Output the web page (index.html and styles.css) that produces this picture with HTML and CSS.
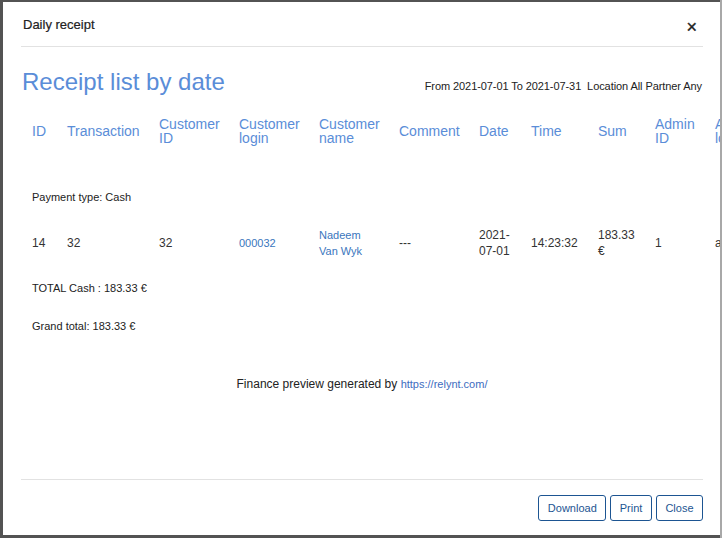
FILE: index.html
```html
<!DOCTYPE html>
<html>
<head>
<meta charset="utf-8">
<link rel="stylesheet" href="styles.css">
</head>
<body>
<div class="modal">
  <div class="modal-header">
    <span class="modal-title">Daily receipt</span>
    <span class="close-x">×</span>
  </div>
  <div class="modal-body">
    <div class="report-head">
      <h1 class="report-title">Receipt list by date</h1>
      <span class="report-info">From 2021-07-01 To 2021-07-31 &nbsp;Location All Partner Any</span>
    </div>
    <table class="receipts">
      <colgroup>
        <col class="c-id"><col class="c-tr"><col class="c-80"><col class="c-80"><col class="c-80"><col class="c-80"><col class="c-date"><col class="c-time"><col class="c-sum"><col class="c-admin"><col class="c-login">
      </colgroup>
      <thead>
        <tr>
          <th>ID</th><th>Transaction</th><th>Customer ID</th><th>Customer login</th><th>Customer name</th><th>Comment</th><th>Date</th><th>Time</th><th>Sum</th><th>Admin ID</th><th>Admin login</th>
        </tr>
      </thead>
      <tbody>
        <tr class="group-row"><td colspan="11">Payment type: Cash</td></tr>
        <tr class="data-row">
          <td>14</td><td>32</td><td>32</td><td><a class="lnk">000032</a></td><td><a class="lnk">Nadeem Van Wyk</a></td><td>---</td><td>2021-07-01</td><td>14:23:32</td><td>183.33 €</td><td>1</td><td>admin</td>
        </tr>
        <tr class="total-row"><td colspan="11">TOTAL Cash : 183.33 €</td></tr>
        <tr class="grand-row"><td colspan="11">Grand total: 183.33 €</td></tr>
      </tbody>
    </table>
    <p class="generated">Finance preview generated by <a class="lnk">https://relynt.com/</a></p>
  </div>
  <div class="modal-footer">
    <button class="btn">Download</button>
    <button class="btn">Print</button>
    <button class="btn">Close</button>
  </div>
</div>
</body>
</html>
```
FILE: styles.css
```css
html {
  background: linear-gradient(to right, #535353 720px, #a8a8a8 720px);
  height: 100%;
}
body {
  margin: 0;
  padding: 2px 0 0 3px;
  font-family: "Liberation Sans", Arial, sans-serif;
  color: #333;
}
.modal {
  width: 717px;
  height: 533px;
  background: #fff;
  display: flex;
  flex-direction: column;
  overflow: hidden;
  box-sizing: border-box;
  padding: 0 17px 0 18px;
}
.modal-header {
  display: flex;
  justify-content: space-between;
  align-items: center;
  padding: 14px 0 12px;
  border-bottom: 1px solid #e2e2e2;
  height: 18px;
  flex: none;
}
.modal-title {
  font-size: 13px;
  color: #222;
  line-height: 18px;
  padding-left: 2px;
  -webkit-text-stroke: 0.2px #222;
}
.close-x {
  font-size: 18px;
  font-weight: normal;
  color: #222;
  line-height: 18px;
  margin-right: 6px;
  margin-top: 3px;
  -webkit-text-stroke: 0.4px #222;
}
.modal-body {
  flex: 1;
  min-height: 0;
}
.report-head {
  display: flex;
  justify-content: space-between;
  align-items: baseline;
  margin-top: 21px;
  padding-right: 1px;
}
.report-title {
  margin: 0;
  font-size: 24px;
  line-height: 28px;
  font-weight: normal;
  color: #5a8dd8;
  padding-left: 1px;
}
.report-info {
  font-size: 11px;
  color: #222;
  letter-spacing: -0.08px;
}
.receipts {
  border-collapse: collapse;
  table-layout: fixed;
  width: 740px;
  margin: 14px 0 0 11px;
}
.c-id { width: 35px; }
.c-tr { width: 92px; }
.c-80 { width: 80px; }
.c-date { width: 52px; }
.c-time { width: 67px; }
.c-sum { width: 57px; }
.c-admin { width: 60px; }
.c-login { width: 77px; }
.receipts th {
  font-weight: normal;
  font-size: 14px;
  line-height: 14px;
  color: #5a8dd8;
  text-align: left;
  height: 42px;
  padding: 0 18px 0 0;
  vertical-align: middle;
}
.receipts td {
  padding: 0 18px 0 0;
  text-align: left;
  vertical-align: middle;
}
.group-row td {
  font-size: 11px;
  line-height: 14px;
  padding-top: 38px;
  padding-bottom: 14px;
  color: #222;
}
.data-row td {
  font-size: 12px;
  line-height: 16px;
  padding-top: 9px;
  padding-bottom: 9px;
  color: #333;
}
.data-row td .lnk {
  font-size: 11px;
}
.total-row td {
  font-size: 11px;
  line-height: 14px;
  padding-top: 13px;
  padding-bottom: 12px;
  color: #222;
}
.grand-row td {
  font-size: 11px;
  line-height: 14px;
  padding-top: 12px;
  color: #222;
}
.lnk {
  color: #3a76bd;
  text-decoration: none;
}
.generated {
  margin: 43px 0 0;
  text-align: center;
  font-size: 12px;
  line-height: 16px;
  color: #222;
}
.generated .lnk {
  font-size: 11px;
  color: #3d6cc0;
}
.modal-footer {
  flex: none;
  border-top: 1px solid #e2e2e2;
  padding: 15px 0 14px;
  display: flex;
  justify-content: flex-end;
  gap: 4px;
}
.btn {
  height: 26px;
  font-family: "Liberation Sans", Arial, sans-serif;
  font-size: 11px;
  color: #1d5592;
  background: #fff;
  border: 1px solid #1d5592;
  border-radius: 3px;
  padding: 0 8.5px;
  margin: 0;
}
```
